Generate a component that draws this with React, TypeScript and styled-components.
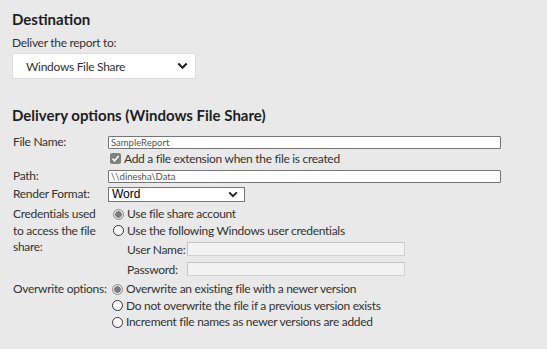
import styled, { createGlobalStyle } from 'styled-components';

const GlobalStyle = createGlobalStyle`
  html, body {
    margin: 0;
    padding: 0;
    background: #e9e9e9;
  }
  body {
    font-family: Lato, 'Noto Sans', sans-serif;
    color: #222;
    width: 547px;
    height: 349px;
    overflow: hidden;
  }
`;

function Chevron({ size = 10 }: { size?: number }) {
  return (
    <svg width={size} height={size * 0.7} viewBox='0 0 10 7'>
      <path d='M1.2 1.4 L5 5.2 L8.8 1.4' fill='none' stroke='#222' strokeWidth='2' />
    </svg>
  );
}

function Radio({ checked }: { checked?: boolean }) {
  return <RadioDot $checked={checked} />;
}

export default function App() {
  return (
    <Page>
      <GlobalStyle />
      <SectionTitle>Destination</SectionTitle>
      <SmallLabel>Deliver the report to:</SmallLabel>
      <DestSelect>
        <span>Windows File Share</span>
        <Chevron size={11} />
      </DestSelect>

      <SectionTitle $spaced>Delivery options (Windows File Share)</SectionTitle>

      <Form>
        <Row $h={13}>
          <Label>File Name:</Label>
          <TextBox $w={393}>SampleReport</TextBox>
        </Row>
        <Row $h={13} $gap={3}>
          <Label />
          <Check>
            <CheckBox>
              <svg width='9' height='9' viewBox='0 0 9 9'>
                <path d='M1.5 4.6 L3.6 6.8 L7.6 2' fill='none' stroke='#fff' strokeWidth='1.6' />
              </svg>
            </CheckBox>
            Add a file extension when the file is created
          </Check>
        </Row>
        <Row $h={14} $gap={4}>
          <Label>Path:</Label>
          <TextBox $w={393}>\\dinesha\Data</TextBox>
        </Row>
        <Row $h={16} $gap={3}>
          <Label>Render Format:</Label>
          <FormatSelect>
            <span>Word</span>
            <Chevron size={10} />
          </FormatSelect>
        </Row>

        <Row $top $gap={4}>
          <Label>
            <LabelLine>Credentials used</LabelLine>
            <LabelLine>to access the file</LabelLine>
            <LabelLine>share:</LabelLine>
          </Label>
          <Options>
            <Option>
              <Radio checked />
              Use file share account
            </Option>
            <Option>
              <Radio />
              Use the following Windows user credentials
            </Option>
            <Creds>
              <CredLabel>User Name:</CredLabel>
              <DisabledBox />
              <CredLabel>Password:</CredLabel>
              <DisabledBox />
            </Creds>
          </Options>
        </Row>

        <Row $top $gap={5}>
          <Label>Overwrite options:</Label>
          <Options $tight>
            <Option>
              <Radio checked />
              Overwrite an existing file with a newer version
            </Option>
            <Option>
              <Radio />
              Do not overwrite the file if a previous version exists
            </Option>
            <Option>
              <Radio />
              Increment file names as newer versions are added
            </Option>
          </Options>
        </Row>
      </Form>
    </Page>
  );
}

const Page = styled.div`
  padding: 9px 12px 0;
  letter-spacing: -0.3px;
`;

const SectionTitle = styled.h2<{ $spaced?: boolean }>`
  margin: ${(p) => (p.$spaced ? '26px 0 11px' : '0 0 6px')};
  font-size: 15px;
  font-weight: 700;
  line-height: 20px;
  letter-spacing: 0;
  color: #1e1e1e;
`;

const SmallLabel = styled.div`
  font-size: 12px;
  line-height: 16px;
  color: #333;
  margin-bottom: 2px;
`;

const DestSelect = styled.div`
  box-sizing: border-box;
  width: 184px;
  height: 26px;
  background: #fff;
  border: 1px solid #dcdcdc;
  display: flex;
  align-items: center;
  justify-content: space-between;
  padding: 0 7px 0 13px;
  font-size: 12px;
  color: #333;
`;

const Form = styled.div`
  display: flex;
  flex-direction: column;
`;

const Row = styled.div<{ $h?: number; $top?: boolean; $gap?: number }>`
  display: flex;
  align-items: ${(p) => (p.$top ? 'flex-start' : 'center')};
  height: ${(p) => (p.$h ? `${p.$h}px` : 'auto')};
  margin-top: ${(p) => p.$gap ?? 0}px;
`;

const Label = styled.div`
  flex: 0 0 96px;
  width: 96px;
  font-size: 12px;
  line-height: 16.5px;
  color: #333;
  padding-left: 1px;
  white-space: nowrap;
  box-sizing: border-box;
`;

const LabelLine = styled.span`
  display: block;
  white-space: nowrap;
`;

const TextBox = styled.div<{ $w: number }>`
  box-sizing: border-box;
  width: ${(p) => p.$w}px;
  height: 13px;
  background: #fff;
  border: 1px solid #767676;
  border-radius: 1px;
  font-size: 9.5px;
  line-height: 11px;
  letter-spacing: 0;
  padding-left: 2px;
  color: #555;
`;

const Check = styled.label`
  display: flex;
  align-items: center;
  gap: 3px;
  font-size: 12px;
  color: #333;
  padding-left: 2px;
`;

const CheckBox = styled.span`
  width: 11px;
  height: 11px;
  border-radius: 2px;
  background: #808080;
  display: inline-flex;
  align-items: center;
  justify-content: center;
`;

const FormatSelect = styled.div`
  box-sizing: border-box;
  width: 137px;
  height: 15px;
  background: #fff;
  border: 1px solid #767676;
  display: flex;
  align-items: center;
  justify-content: space-between;
  padding: 0 6px 0 3px;
  font-family: 'Liberation Sans', Arial, sans-serif;
  font-size: 12px;
  letter-spacing: 0;
  color: #000;
`;

const Options = styled.div<{ $tight?: boolean }>`
  display: flex;
  flex-direction: column;
  padding-left: ${(p) => (p.$tight ? '4px' : '5px')};
`;

const Option = styled.label`
  display: flex;
  align-items: center;
  gap: 3px;
  font-size: 12px;
  line-height: 16.5px;
  color: #333;
`;

const RadioDot = styled.span<{ $checked?: boolean }>`
  box-sizing: border-box;
  width: 11px;
  height: 11px;
  border-radius: 50%;
  border: 1px solid ${(p) => (p.$checked ? '#8a8a8a' : '#333')};
  background: ${(p) => (p.$checked ? 'radial-gradient(circle, #7a7a7a 0 3px, #e4e4e4 3.5px)' : '#fff')};
`;

const Creds = styled.div`
  display: grid;
  grid-template-columns: 60px 218px;
  grid-auto-rows: 14px;
  row-gap: 6px;
  align-items: center;
  margin-top: 3px;
  padding-left: 14px;
`;

const CredLabel = styled.span`
  font-size: 12px;
  color: #333;
  white-space: nowrap;
`;

const DisabledBox = styled.div`
  box-sizing: border-box;
  height: 14px;
  background: #f2f2f2;
  border: 1px solid #cfcfcf;
  border-top-color: #c4c4c4;
  border-left-color: #c4c4c4;
  border-radius: 1px;
`;
